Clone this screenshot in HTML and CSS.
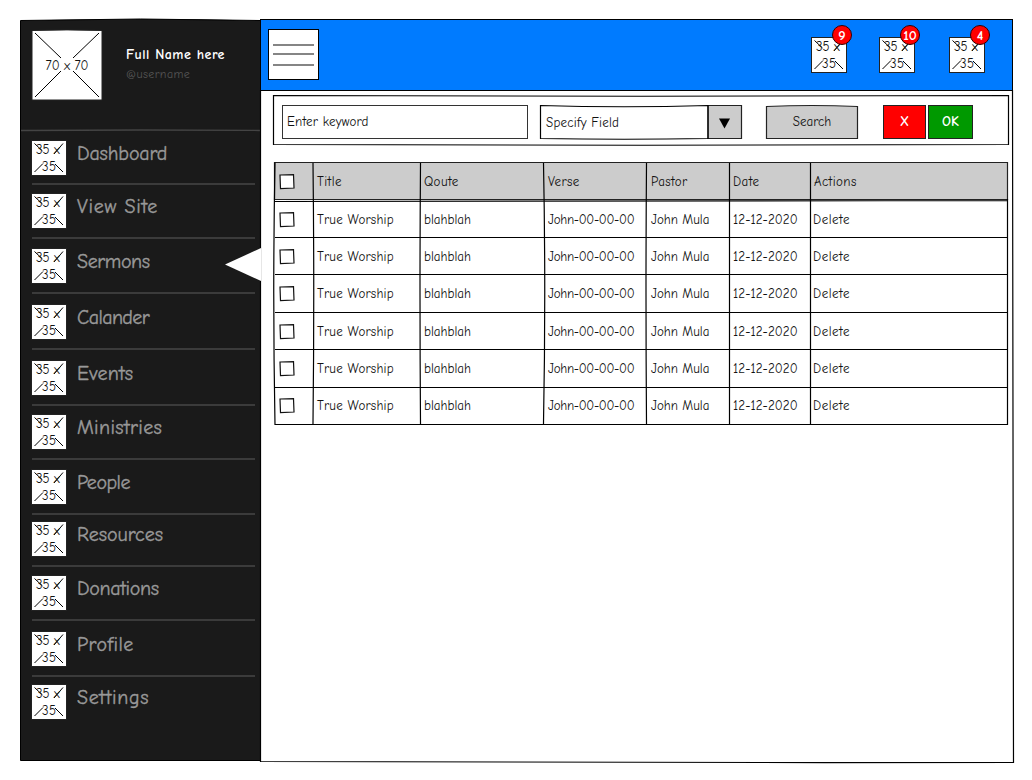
FILE: index.html
```
<!DOCTYPE html>
<html lang="en">
<head>
<meta charset="utf-8">
<title>Sermons</title>
<link rel="stylesheet" href="styles.css">
</head>
<body>
<svg class="defs" width="0" height="0">
  <symbol id="ph35" viewBox="0 0 36 36">
    <rect class="box" x=".5" y=".5" width="35" height="35"/>
    <path class="ln" d="M3.500 3.500L11.500 11M32 3.500L23 14M3.500 32L12 23.500M32 32L24 24"/>
  </symbol>
  <symbol id="cb" viewBox="0 0 16 16"><path class="box dark" d="M1 1L14.500.7L15 14L1.500 14.700Z"/></symbol>
</svg>
<div class="app">
  <aside class="sidebar">
    <svg class="sketch" viewBox="0 0 240 743" preserveAspectRatio="none"><path class="panel" d="M.5 1.500Q120-1.500 240.500 1.500V741.500H.5Z"/></svg>
    <div class="profile">
      <svg class="avatar" viewBox="0 0 70 70"><path class="box" d="M0 .5Q35-.7 70 .5V70H0Z"/><path class="ln" d="M3 3L29 28M67 3L41 28M3 67L29 41M67 67L41 41"/><text x="13.500" y="40" textLength="43">70 x 70</text></svg>
      <div class="who"><div class="name">Full Name here</div><div class="user">@username</div></div>
      <svg class="rule" viewBox="0 0 239 4"><path d="M0 2.500Q120 1.500 239 2.500"/></svg>
    </div>
    <nav>
      <a class="item first g9"><svg class="ph" viewBox="0 0 36 36"><use href="#ph35"/><text x="5" y="14" textLength="24">35 x</text><text x="11" y="31" textLength="14">35</text></svg><span class="l1">Dashboard</span></a>
      <a class="item g10"><svg class="ph" viewBox="0 0 36 36"><use href="#ph35"/><text x="5" y="14" textLength="24">35 x</text><text x="11" y="31" textLength="14">35</text></svg><span class="l2">View Site</span></a>
      <a class="item g11"><svg class="ph" viewBox="0 0 36 36"><use href="#ph35"/><text x="5" y="14" textLength="24">35 x</text><text x="11" y="31" textLength="14">35</text></svg><span class="l3">Sermons</span><svg class="pointer" viewBox="0 0 36 33"><path d="M0 16.500L36 0V33Z"/></svg></a>
      <a class="item g11"><svg class="ph" viewBox="0 0 36 36"><use href="#ph35"/><text x="5" y="14" textLength="24">35 x</text><text x="11" y="31" textLength="14">35</text></svg><span class="l4">Calander</span></a>
      <a class="item g9"><svg class="ph" viewBox="0 0 36 36"><use href="#ph35"/><text x="5" y="14" textLength="24">35 x</text><text x="11" y="31" textLength="14">35</text></svg><span class="l5">Events</span></a>
      <a class="item g10"><svg class="ph" viewBox="0 0 36 36"><use href="#ph35"/><text x="5" y="14" textLength="24">35 x</text><text x="11" y="31" textLength="14">35</text></svg><span class="l6">Ministries</span></a>
      <a class="item g7"><svg class="ph" viewBox="0 0 36 36"><use href="#ph35"/><text x="5" y="14" textLength="24">35 x</text><text x="11" y="31" textLength="14">35</text></svg><span class="l7">People</span></a>
      <a class="item g9"><svg class="ph" viewBox="0 0 36 36"><use href="#ph35"/><text x="5" y="14" textLength="24">35 x</text><text x="11" y="31" textLength="14">35</text></svg><span>Resources</span></a>
      <a class="item g11"><svg class="ph" viewBox="0 0 36 36"><use href="#ph35"/><text x="5" y="14" textLength="24">35 x</text><text x="11" y="31" textLength="14">35</text></svg><span class="l9">Donations</span></a>
      <a class="item g8"><svg class="ph" viewBox="0 0 36 36"><use href="#ph35"/><text x="5" y="14" textLength="24">35 x</text><text x="11" y="31" textLength="14">35</text></svg><span class="l10">Profile</span></a>
      <a class="item last"><svg class="ph" viewBox="0 0 36 36"><use href="#ph35"/><text x="5" y="14" textLength="24">35 x</text><text x="11" y="31" textLength="14">35</text></svg><span class="l11">Settings</span></a>
    </nav>
  </aside>
  <main>
    <header>
      <button class="menu"><i></i><i></i><i></i></button>
      <div class="alerts">
        <div class="alert"><svg class="ph" viewBox="0 0 36 36"><use href="#ph35"/><text x="5" y="14" textLength="24">35 x</text><text x="11" y="31" textLength="14">35</text></svg><b>9</b></div>
        <div class="alert"><svg class="ph" viewBox="0 0 36 36"><use href="#ph35"/><text x="5" y="14" textLength="24">35 x</text><text x="11" y="31" textLength="14">35</text></svg><b>10</b></div>
        <div class="alert"><svg class="ph" viewBox="0 0 36 36"><use href="#ph35"/><text x="5" y="14" textLength="24">35 x</text><text x="11" y="31" textLength="14">35</text></svg><b>4</b></div>
      </div>
    </header>
    <section class="content">
      <svg class="sketch" viewBox="0 0 754 673" preserveAspectRatio="none"><path class="line" d="M.5.500H752.500L753.500 672.500Q377 673 .5 671.500Z"/></svg>
      <div class="filters">
        <svg class="sketch" viewBox="0 0 736 50" preserveAspectRatio="none"><path class="line" d="M.5.500Q368 2 735.500.500V49.500Q368 51 .5 49.500Z"/></svg>
        <div class="input"><span>Enter keyword</span></div>
        <div class="select">
          <svg class="sketch" viewBox="0 0 202 34" preserveAspectRatio="none"><path class="grey" d="M168 .5H201.500V33.500H168Z"/><path class="line" d="M.5.500Q84 3 168 .5V33.500Q84 35 .5 33.500Z"/><path d="M179 13.500H190L184.500 23.500Z"/></svg>
          <span>Specify Field</span>
        </div>
        <button class="btn search"><svg class="sketch" viewBox="0 0 92 34" preserveAspectRatio="none"><path class="grey" d="M.5 1.500Q46-.5 91.500 1.500V33.500H.5Z"/></svg><span>Search</span></button>
        <button class="btn no">X</button>
        <button class="btn ok">OK</button>
      </div>
      <div class="table">
        <svg class="sketch" viewBox="0 0 734 263" preserveAspectRatio="none">
          <path class="grey" d="M.5.500H733.500V37.500H.5Z"/>
          <path class="line" d="M1 .5Q-1.500 131 1 262.500H733.500V37M0 39.500Q300 38 733 38.500M1 75.500H733M1 112.500H733M1 150.500H733M1 187.500H733M1 225.500H733"/>
          <path class="line" d="M39 1Q40.500 130 39 262M146.500 1Q145.500 130 146.500 262M269.500 1Q272 130 269.500 262M372.500 1Q371.500 130 372.500 262M455.500 1V262M536.500 1V262"/>
        </svg>
        <div class="row head"><span><svg class="check"><use href="#cb"/></svg></span><span>Title</span><span>Qoute</span><span>Verse</span><span>Pastor</span><span>Date</span><span>Actions</span></div>
        <div class="row"><span><svg class="check"><use href="#cb"/></svg></span><span class="title">True Worship</span><span>blahblah</span><span class="verse">John-00-00-00</span><span>John Mula</span><span class="date">12-12-2020</span><span class="action">Delete</span></div>
        <div class="row"><span><svg class="check"><use href="#cb"/></svg></span><span class="title">True Worship</span><span>blahblah</span><span class="verse">John-00-00-00</span><span>John Mula</span><span class="date">12-12-2020</span><span class="action">Delete</span></div>
        <div class="row"><span><svg class="check"><use href="#cb"/></svg></span><span class="title">True Worship</span><span>blahblah</span><span class="verse">John-00-00-00</span><span>John Mula</span><span class="date">12-12-2020</span><span class="action">Delete</span></div>
        <div class="row"><span><svg class="check"><use href="#cb"/></svg></span><span class="title">True Worship</span><span>blahblah</span><span class="verse">John-00-00-00</span><span>John Mula</span><span class="date">12-12-2020</span><span class="action">Delete</span></div>
        <div class="row"><span><svg class="check"><use href="#cb"/></svg></span><span class="title">True Worship</span><span>blahblah</span><span class="verse">John-00-00-00</span><span>John Mula</span><span class="date">12-12-2020</span><span class="action">Delete</span></div>
        <div class="row"><span><svg class="check"><use href="#cb"/></svg></span><span class="title">True Worship</span><span>blahblah</span><span class="verse">John-00-00-00</span><span>John Mula</span><span class="date">12-12-2020</span><span class="action">Delete</span></div>
      </div>
    </section>
  </main>
</div>
</body>
</html>
```
FILE: styles.css
```
* { box-sizing: border-box; }
body { margin: 0; width: 1032px; height: 780px; overflow: hidden; background: #fff; color: #111; font: 13px/16px "Comic Sans MS", "Comic Neue", Lato, sans-serif; font-variant-ligatures: none; }
.defs { position: absolute; }
.app { display: flex; padding: 19px 0 0 20px; }
.sketch { position: absolute; inset: 0; width: 100%; height: 100%; overflow: visible; z-index: 0; }
.line { fill: none; stroke: #000; stroke-width: 1.2; }
.grey { fill: #ccc; stroke: #222; stroke-width: 1.2; }
.box { fill: #fff; stroke: #222; stroke-width: 1; }
.box.dark { stroke: #111; stroke-width: 1.2; }
.ln { fill: none; stroke: #000; stroke-width: 1; }
svg text { font-size: 13px; fill: #111; }

.sidebar { position: relative; width: 240px; height: 743px; flex: none; }
.panel { fill: #1a1a1a; stroke: #000; }
.profile { position: relative; height: 121px; display: flex; gap: 24px; padding: 11px 0 0 12px; }
.avatar { width: 70px; height: 70px; position: relative; overflow: visible; }
.who { position: relative; padding-top: 16px; white-space: nowrap; }
.name { color: #fff; font-weight: bold; font-size: 14px; line-height: 18px; letter-spacing: .45px; }
.user { color: #555; font-size: 12px; line-height: 20px; letter-spacing: .4px; }
.rule { position: absolute; left: 1px; top: 109px; width: 239px; height: 4px; fill: none; stroke: #444; stroke-width: 1.3; }
nav { position: relative; padding-left: 12px; }
.item { position: relative; display: flex; gap: 10px; width: 223px; height: 46px; border-bottom: 2px solid #3b3b3b; }
.item.first { height: 45px; }
.item span { color: #999; font-size: 20px; line-height: 28px; -webkit-text-stroke: .35px #999; }
.ph { width: 36px; height: 36px; flex: none; }
.item .ph { margin-left: -1px; }
.g9 { margin-bottom: 8px; }
.g10 { margin-bottom: 9px; }
.g11 { margin-bottom: 10px; }
.g7 { margin-bottom: 6px; }
.g8 { margin-bottom: 7px; }
.item.last { border: 0; }
.item .l1 { letter-spacing: -.15px; }
.item .l2 { letter-spacing: .7px; }
.item .l3 { letter-spacing: -.4px; }
.item .l4 { letter-spacing: -.6px; }
.item .l5 { letter-spacing: .2px; }
.item .l6 { letter-spacing: .35px; }
.item .l7 { letter-spacing: -.5px; }
.item .l9 { letter-spacing: -.35px; }
.item .l10 { letter-spacing: .4px; }
.item .l11 { letter-spacing: .65px; }
.pointer { position: absolute; left: 193px; top: 0; width: 36px; height: 33px; fill: #fff; z-index: 2; }

main { width: 754px; }
header { height: 71px; width: 753px; background: #007bff; border: 1px solid #000; border-bottom: 0; display: flex; justify-content: space-between; padding: 9px 27px 0 7px; }
.menu { width: 51px; height: 51px; background: #fff; border: 1px solid #000; padding: 14px 4px 0; display: flex; flex-direction: column; }
.menu i { height: 2px; width: 41px; background: #858585; margin-bottom: 7px; }
.menu i:nth-child(2) { margin-bottom: 9px; }
.alerts { display: flex; padding-top: 8px; }
.alert { position: relative; width: 36px; height: 36px; margin-left: 32px; }
.alert:last-child { margin-left: 34px; }
.alert b { position: absolute; left: 21px; top: -12px; width: 20px; height: 20px; border-radius: 50%; border: 1px solid #300; background: red; color: #fff; font-size: 14px; line-height: 19px; text-align: center; }
.content { position: relative; width: 754px; height: 673px; padding: 5px 0 0 13px; }
.filters { position: relative; width: 736px; height: 50px; display: flex; padding: 10px 0 0 9px; letter-spacing: .22px; }
.input { width: 246px; height: 34px; border: 1.500px solid #333; padding: 8px 4px; }
.select { position: relative; width: 202px; height: 34px; margin-left: 12px; padding: 10px 6px; }
.select span, .btn span { position: relative; }
.btn { position: relative; height: 34px; border: 1px solid #222; padding: 0; font: inherit; color: #111; text-align: center; }
.search { width: 92px; margin-left: 24px; border: 0; background: none; }
.no { width: 43px; margin-left: 25px; background: red; color: #fff; font-weight: bold; }
.ok { width: 45px; margin-left: 2px; background: #090; color: #fff; font-weight: bold; font-size: 14px; }
.table { position: relative; width: 734px; height: 263px; margin: 17px 0 0 1px; }
.row { position: relative; display: grid; grid-template-columns: 39px 107px 124px 103px 82px 81px 1fr; height: 37.300px; align-items: center; }
.row span { padding: 2px 0 0 4px; white-space: nowrap; }
.row span.title { letter-spacing: .2px; }
.row span.verse { letter-spacing: -.3px; }
.row span.date { letter-spacing: .1px; }
.row span.action { padding-left: 3px; letter-spacing: .5px; }
.row.head { height: 38px; letter-spacing: .4px; }
.check { display: block; width: 16px; height: 16px; margin: 0 0 0 1px; }
```
